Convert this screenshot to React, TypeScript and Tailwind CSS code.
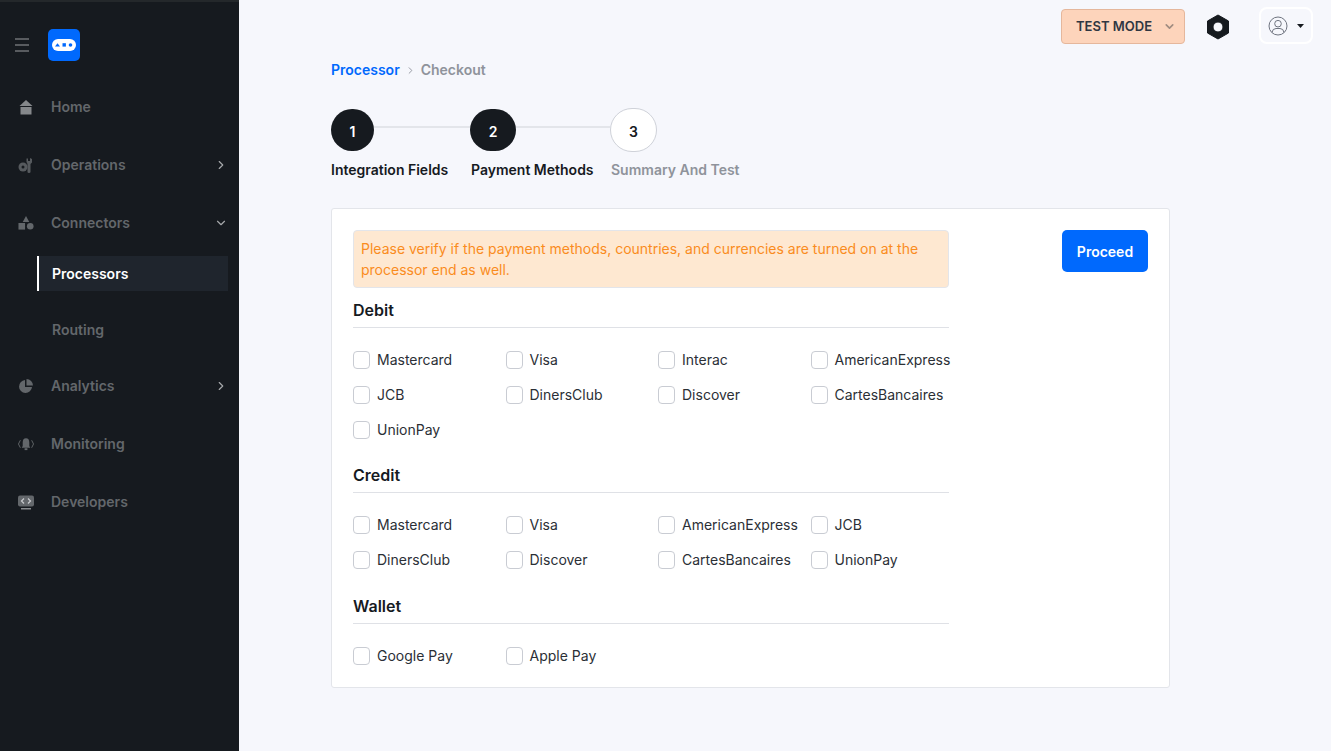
import React from 'react';
import { ChevronRight, ChevronDown } from 'lucide-react';

const HomeIcon = () => (
  <svg width="16" height="16" viewBox="0 0 16 16" fill="#85888b">
    <path d="M8 1 L14.5 7 H1.5 Z" />
    <rect x="2.5" y="8" width="11" height="7.5" />
  </svg>
);

const OperationsIcon = () => (
  <svg width="16" height="16" viewBox="0 0 16 16" fill="#565a5e">
    <circle cx="5" cy="10" r="4.5" />
    <circle cx="5" cy="10" r="1.5" fill="#161a1f" />
    <path d="M8.5 5 L8.5 1.5 L10 1.5 L10 4 L12 4 L12 1 L14 2 L14 5.5 L12.5 7 L12.5 15 Q12.5 16 11 16 Q9.5 16 9.5 15 L9.5 7 Z" />
  </svg>
);

const ConnectorsIcon = () => (
  <svg width="17" height="16" viewBox="0 0 17 16" fill="currentColor">
    <path d="M8.5 0.5 L12 7 H5 Z" />
    <rect x="0.5" y="8" width="7" height="7" />
    <circle cx="13" cy="11.5" r="3.5" />
  </svg>
);

const AnalyticsIcon = () => (
  <svg width="16" height="16" viewBox="0 0 16 16" fill="currentColor">
    <path d="M7 2 A6.5 6.5 0 1 0 14 9 H7 Z" />
    <path d="M8.5 1 A6.5 6.5 0 0 1 15 7.5 H8.5 Z" />
  </svg>
);

const MonitoringIcon = () => (
  <svg width="17" height="14" viewBox="0 0 17 14" fill="currentColor">
    <path d="M8.5 1 Q12 1 12 5.5 V9 L13 11 H4 L5 9 V5.5 Q5 1 8.5 1 Z" />
    <rect x="7" y="11.5" width="3" height="2" />
    <path d="M2.5 3 L0.5 7 L2.5 11 M14.5 3 L16.5 7 L14.5 11" fill="none" stroke="currentColor" strokeWidth="1" />
  </svg>
);

const DevelopersIcon = () => (
  <svg width="16" height="15" viewBox="0 0 16 15" fill="none">
    <rect x="0" y="0.5" width="16" height="11" rx="2" fill="currentColor" />
    <path d="M6 3.5 L3.5 6 L6 8.5 M10 3.5 L12.5 6 L10 8.5" stroke="#c9cbce" strokeWidth="1.2" />
    <rect x="3" y="13.2" width="10" height="1.2" fill="#a5a7aa" />
  </svg>
);

const NavItem = ({ icon, label, chevron }: { icon: React.ReactNode; label: string; chevron?: 'right' | 'down' }) => (
  <div className="flex h-[58px] items-center pl-[18px] pr-[11px] text-[#63676b]">
    <div className="mt-[2px] flex w-[16px] justify-center">{icon}</div>
    <span className="ml-[17px] flex-1 text-[14px] font-semibold">{label}</span>
    {chevron === 'right' && <ChevronRight size={14} className="mt-[1px] text-[#a5a7aa]" />}
    {chevron === 'down' && <ChevronDown size={14} className="mt-[1px] text-[#a5a7aa]" />}
  </div>
);

const Sidebar = () => (
  <aside className="flex w-[239px] shrink-0 flex-col border-t-2 border-[#24282b] bg-[#161a1f]">
    <div className="flex h-[75px] items-start pl-[15px] pt-[27px]">
      <svg className="mt-[9px]" width="14" height="14" viewBox="0 0 14 14" fill="#9a9c9f">
        <rect y="0.5" width="14" height="1" />
        <rect y="6.5" width="14" height="1" />
        <rect y="12.5" width="14" height="1" />
      </svg>
      <div className="ml-[19px] flex h-[32px] w-[32px] items-center justify-center rounded-[5px] bg-[#0069fd]">
        <svg width="24" height="12" viewBox="0 0 24 12">
          <rect width="24" height="12" rx="6" fill="#fff" />
          <path d="M5.5 4.2 L8 7.6 H3 Z" fill="#0069fd" />
          <rect x="10.5" y="4.2" width="3.4" height="3.4" fill="#0069fd" />
          <circle cx="18.5" cy="6" r="1.8" fill="#0069fd" />
        </svg>
      </div>
    </div>
    <NavItem icon={<HomeIcon />} label="Home" />
    <NavItem icon={<OperationsIcon />} label="Operations" chevron="right" />
    <NavItem icon={<ConnectorsIcon />} label="Connectors" chevron="down" />
    <div className="ml-[37px] mr-[11px] mt-[5px] flex h-[35px] items-center border-l-2 border-white bg-[#1f252d] pl-[13px] text-[14px] font-semibold text-white">
      Processors
    </div>
    <div className="ml-[37px] mr-[11px] mt-[21px] mb-[9px] flex h-[35px] items-center pl-[15px] text-[14px] font-semibold text-[#63676b]">
      Routing
    </div>
    <NavItem icon={<AnalyticsIcon />} label="Analytics" chevron="right" />
    <NavItem icon={<MonitoringIcon />} label="Monitoring" />
    <NavItem icon={<DevelopersIcon />} label="Developers" />
  </aside>
);

const Header = () => (
  <div className="flex h-[44px] items-start justify-end pr-[18px] pt-[7px]">
    <button className="mt-[2px] flex h-[35px] w-[124px] items-center rounded-[4px] border border-[#e5b79c] bg-[#fdd4bb] pl-[14px] text-[13px] font-semibold text-[#2f3642]">
      TEST MODE
      <ChevronDown size={13} strokeWidth={3} className="ml-[11px] text-[#a08c80]" />
    </button>
    <svg className="ml-[21px] mt-[7px]" width="24" height="26" viewBox="0 0 24 26">
      <path
        fillRule="evenodd"
        d="M12 1 L22.5 7 V19 L12 25 L1.5 19 V7 Z M12 8 A5 5 0 1 0 12 18 A5 5 0 1 0 12 8 Z"
        fill="#161a1f"
        stroke="#161a1f"
        strokeWidth="1"
        strokeLinejoin="round"
      />
    </svg>
    <div className="ml-[29px] flex h-[37px] w-[54px] items-center rounded-[8px] border-2 border-white pl-[7px]">
      <svg width="20" height="20" viewBox="0 0 20 20" fill="none" stroke="#6f7480" strokeWidth="1">
        <circle cx="10" cy="10" r="9" />
        <circle cx="10" cy="7.7" r="3.3" />
        <path d="M4 16.5 Q4.5 12.5 8 12.5 H12 Q15.5 12.5 16 16.5" />
      </svg>
      <svg className="ml-[9px]" width="7" height="4" viewBox="0 0 7 4">
        <path d="M0 0 H7 L3.5 4 Z" fill="#161a1f" />
      </svg>
    </div>
  </div>
);

const Circle = ({ num, done, size }: { num: string; done: boolean; size: string }) => (
  <div
    className={`flex shrink-0 items-center justify-center rounded-full text-[14px] font-semibold ${size} ${
      done ? 'bg-[#161a1f] text-white' : 'border border-[#cfd2d9] bg-white text-[#161a1f]'
    }`}
  >
    <span className="mt-[3px]">{num}</span>
  </div>
);

const Stepper = () => (
  <div className="mt-[28px]">
    <div className="flex h-[44px] items-center">
      <Circle num="1" done size="h-[42px] w-[43px]" />
      <div className="-mt-[6px] h-[2px] w-[96px] bg-[#e3e5ea]" />
      <Circle num="2" done size="h-[42px] w-[46px]" />
      <div className="-mt-[6px] h-[2px] w-[94px] bg-[#e3e5ea]" />
      <Circle num="3" done={false} size="h-[44px] w-[47px]" />
    </div>
    <div className="mt-[8px] flex text-[14px] font-semibold leading-[20px]">
      <span className="w-[140px] text-[#161a1f]">Integration Fields</span>
      <span className="w-[140px] text-[#161a1f]">Payment Methods</span>
      <span className="text-[#8f939b]">Summary And Test</span>
    </div>
  </div>
);

const Option = ({ label }: { label: string }) => (
  <label className="flex h-[35px] items-center whitespace-nowrap text-[14px] text-[#2b2f36]">
    <span className="h-[18px] w-[17px] shrink-0 rounded-[4px] border border-[#c9ccd3] bg-white" />
    <span className="ml-[7px]">{label}</span>
  </label>
);

const Section = ({ title, options, mt }: { title: string; options: string[]; mt: string }) => (
  <div className={mt}>
    <div className="border-b border-[#dfe1e6] pb-[5px] text-[16px] font-semibold leading-[24px] text-[#161a1f]">{title}</div>
    <div className="mt-[14px] grid grid-cols-[repeat(4,138.5px)] gap-x-[14px]">
      {options.map((o) => (
        <Option key={o} label={o} />
      ))}
    </div>
  </div>
);

const App: React.FC = () => {
  return (
    <div className="flex h-[751px] w-full overflow-hidden bg-[#f6f7fc] font-['Inter',sans-serif]">
      <Sidebar />
      <main className="flex-1">
        <Header />
        <div className="ml-[92px] w-[839px]">
          <div className="mt-[16px] flex h-[20px] items-center text-[14px] font-semibold leading-[20px]">
            <span className="text-[#0069fd]">Processor</span>
            <ChevronRight size={11} className="mx-[5px] text-[#8f939b]" />
            <span className="text-[#8f939b]">Checkout</span>
          </div>
          <Stepper />
          <div className="mt-[28px] flex h-[480px] justify-between rounded-[3px] border border-[#e3e5ea] bg-white p-[21px]">
            <div className="w-[596px]">
              <div className="h-[58px] rounded-[4px] border border-[#e3e5ea] bg-[#fee8d1] px-[7px] pt-[7px] text-[14px] leading-[21px] text-[#fa8c1e]">
                Please verify if the payment methods, countries, and currencies are turned on at the processor end as well.
              </div>
              <Section
                mt="mt-[10px]"
                title="Debit"
                options={['Mastercard', 'Visa', 'Interac', 'AmericanExpress', 'JCB', 'DinersClub', 'Discover', 'CartesBancaires', 'UnionPay']}
              />
              <Section
                mt="mt-[16px]"
                title="Credit"
                options={['Mastercard', 'Visa', 'AmericanExpress', 'JCB', 'DinersClub', 'Discover', 'CartesBancaires', 'UnionPay']}
              />
              <Section mt="mt-[17px]" title="Wallet" options={['Google Pay', 'Apple Pay']} />
            </div>
            <button className="h-[42px] w-[86px] rounded-[5px] bg-[#0069fd] text-[14px] font-semibold text-white">Proceed</button>
          </div>
        </div>
      </main>
    </div>
  );
};

export default App;
